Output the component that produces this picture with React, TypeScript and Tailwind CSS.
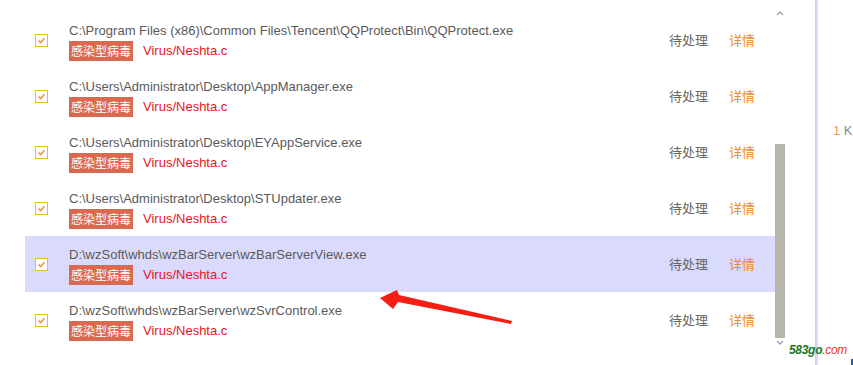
import React from "react";

const rows = [
  "C:\\Program Files (x86)\\Common Files\\Tencent\\QQProtect\\Bin\\QQProtect.exe",
  "C:\\Users\\Administrator\\Desktop\\AppManager.exe",
  "C:\\Users\\Administrator\\Desktop\\EYAppService.exe",
  "C:\\Users\\Administrator\\Desktop\\STUpdater.exe",
  "D:\\wzSoft\\whds\\wzBarServer\\wzBarServerView.exe",
  "D:\\wzSoft\\whds\\wzBarServer\\wzSvrControl.exe",
];

function Check() {
  return (
    <div className="w-[13px] h-[13px] border border-[#f6b62a] bg-white flex items-center justify-center shrink-0">
      <svg width="9" height="9" viewBox="0 0 9 9">
        <path d="M1.5 4.5 L3.6 6.5 L7.5 2.3" fill="none" stroke="#f29a1c" strokeWidth="1.6" />
      </svg>
    </div>
  );
}

export default function App() {
  return (
    <div
      className="relative w-[853px] h-[365px] bg-white overflow-hidden flex"
      style={{ fontFamily: '"Liberation Sans", "Noto Sans CJK SC", sans-serif' }}
    >
      {/* list */}
      <div className="w-[750px] ml-[25px] pt-[12px] flex flex-col">
        {rows.map((p, i) => (
          <div
            key={i}
            className={`h-[56px] flex items-center shrink-0 ${i === 4 ? "bg-[#dadafc]" : ""}`}
          >
            <div className="ml-[10px]">
              <Check />
            </div>
            <div className="ml-[21px] flex-1 h-[56px] pt-[10px] flex flex-col">
              <div className="text-[13px] leading-[18px] text-[#5a5a5a] whitespace-nowrap">{p}</div>
              <div className="mt-[1px] flex items-center">
                <span
                  className="bg-[#d96a51] text-white text-[12px] leading-[20px] px-[2px]"
                  style={{ fontFamily: '"Noto Sans CJK SC", sans-serif' }}
                >
                  感染型病毒
                </span>
                <span className="ml-[10px] text-[13px] text-[#e3162a]">Virus/Neshta.c</span>
              </div>
            </div>
            <div
              className="w-[60px] text-[13px] text-[#666666]"
              style={{ fontFamily: '"Noto Sans CJK SC", sans-serif' }}
            >
              待处理
            </div>
            <div
              className="w-[46px] text-[13px] text-[#f18a1f]"
              style={{ fontFamily: '"Noto Sans CJK SC", sans-serif' }}
            >
              详情
            </div>
          </div>
        ))}
      </div>

      {/* scrollbar */}
      <div className="w-[10px] h-[365px] flex flex-col items-center">
        <svg width="8" height="6" viewBox="0 0 8 6" className="mt-[10px]">
          <path d="M1 5 L4 2 L7 5" fill="none" stroke="#9a9aa8" strokeWidth="1.3" />
        </svg>
        <div className="mt-[128px] w-[10px] h-[194px] bg-[#b6b6aa]" />
        <svg width="8" height="6" viewBox="0 0 8 6" className="mt-[2px]">
          <path d="M1 1 L4 4 L7 1" fill="none" stroke="#9a9aa8" strokeWidth="1.3" />
        </svg>
      </div>

      {/* divider */}
      <div className="ml-[30px] h-[365px] flex">
        <div className="w-[1px] h-full bg-[#d4dac0]" />
        <div className="w-[2px] h-full bg-[#dadaf8]" />
      </div>

      {/* right column */}
      <div className="ml-[15px] pt-[121px] text-[13px] text-[#8a8a8a] whitespace-nowrap">
        <span className="text-[#d9a070]">1</span> K
      </div>

      {/* red arrow */}
      <svg className="absolute left-0 top-0 pointer-events-none" width="853" height="365">
        <polygon
          points="380,298 397,290 399,295 512,321 511,324 398,302 393,309"
          fill="#f41e12"
        />
      </svg>

      {/* watermark */}
      <div
        className="absolute left-[789px] top-[342px] text-[12px] italic leading-[16px] tracking-[-0.3px] whitespace-nowrap"
        style={{ fontFamily: '"Liberation Sans", sans-serif' }}
      >
        <span className="text-[#17782c] font-bold">583go</span>
        <span className="text-[#e23a26]">.com</span>
      </div>
      <div className="absolute left-[851px] top-[359px] w-[2px] h-[6px] bg-[#2a5ab0]" />
    </div>
  );
}
